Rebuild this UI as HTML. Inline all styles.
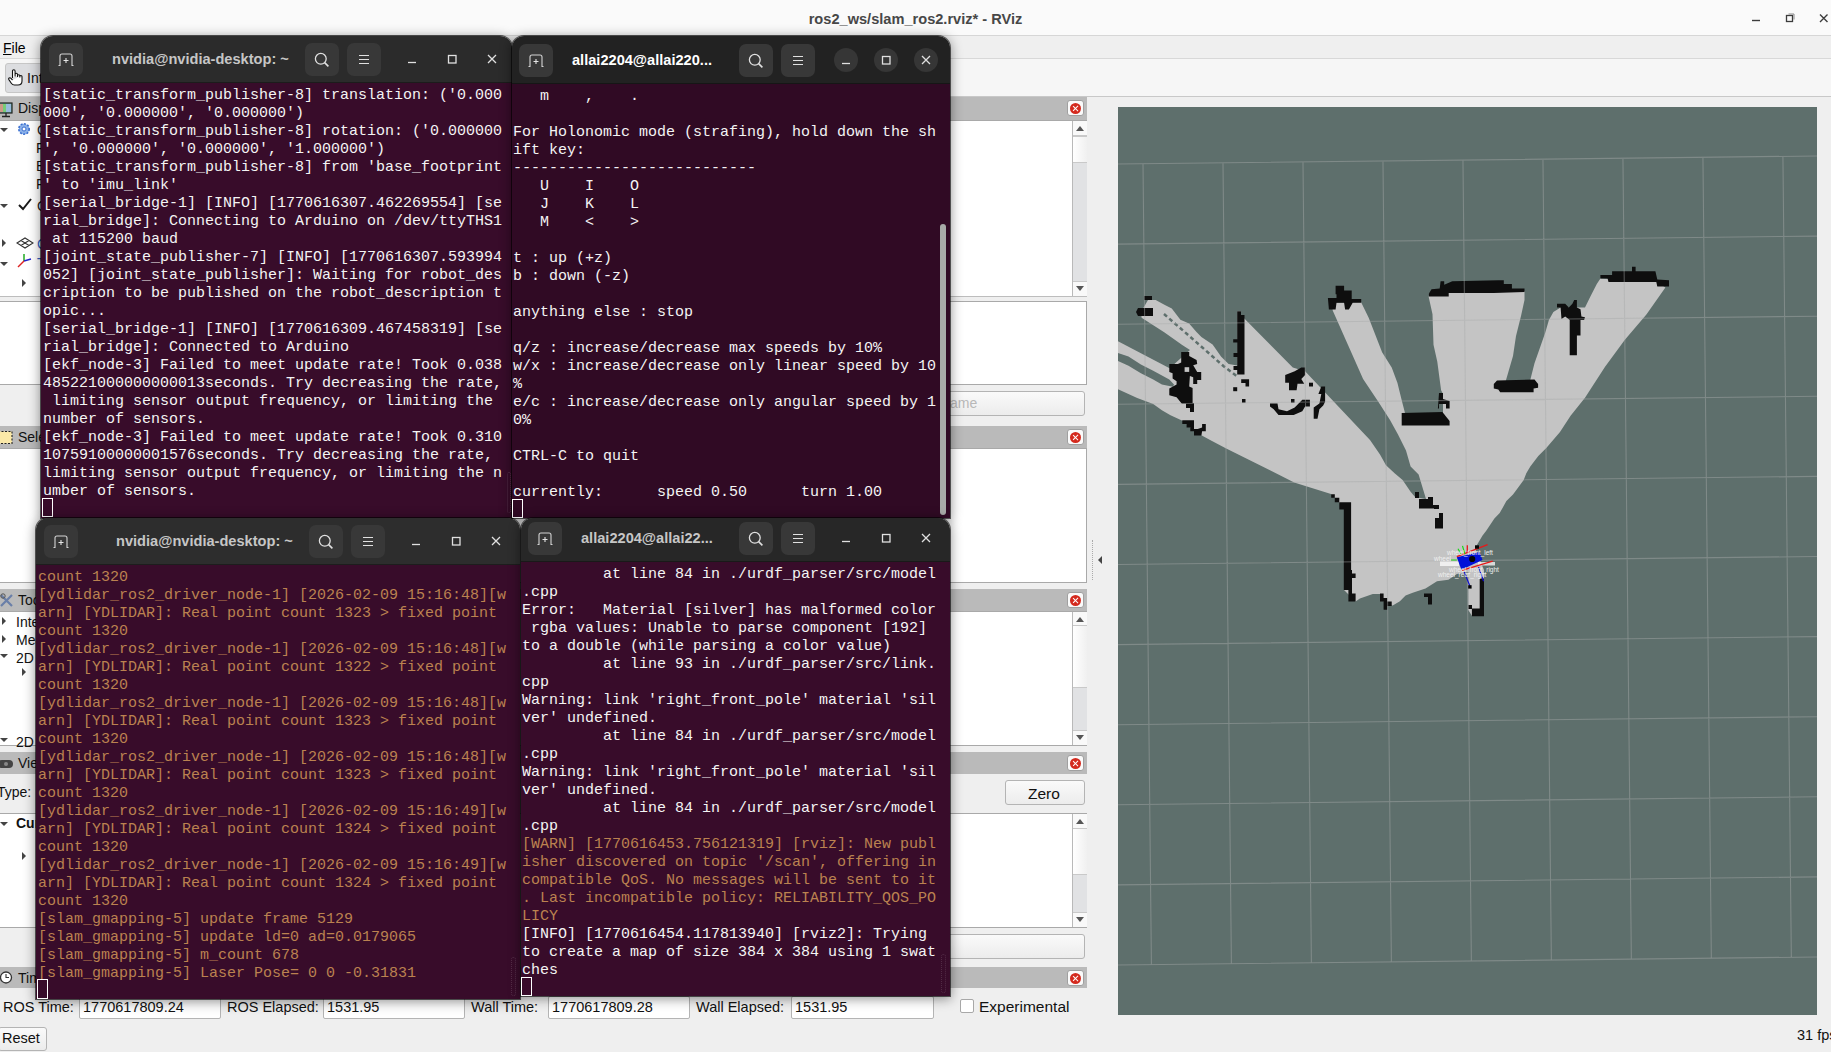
<!DOCTYPE html>
<html><head><meta charset="utf-8"><style>
html,body{margin:0;padding:0}
body{width:1831px;height:1052px;position:relative;overflow:hidden;background:#efefef;font-family:"Liberation Sans",sans-serif}
.ui{position:absolute;white-space:nowrap;line-height:16px}
.title{position:absolute;font-weight:bold;font-size:14.6px;color:#474747;line-height:18px}
.tw{position:absolute;border-radius:12px 12px 0 0;overflow:hidden;box-shadow:0 0 0 1px rgba(0,0,0,0.6),0 2px 12px 1px rgba(0,0,0,0.42)}
.th{position:absolute;left:0;top:0;right:0;box-shadow:inset 0 -1px 0 rgba(0,0,0,0.35)}
.tb{position:absolute;left:0;right:0}
.hb{position:absolute;background:#383838;border-radius:7px;display:flex;align-items:center;justify-content:center}
.cb{position:absolute;width:24px;height:24px;border-radius:12px;background:#363636}
.ic{position:absolute;width:12px;height:12px}
.ic svg{display:block}
.hb svg{display:block}
.tt{position:absolute;font-weight:bold;font-size:14.6px;line-height:18px;white-space:nowrap}
.tx{position:absolute;font-family:"Liberation Mono",monospace;font-size:15px}
.ln{position:absolute;left:0;white-space:pre;line-height:18px;height:18px}
.cur{position:absolute;width:11px;height:19.5px;border:1.5px solid #fff;box-sizing:border-box}
.sb{position:absolute;width:6px;border-radius:3px;background:#a8aaa8}
.xbtn{position:absolute;width:17px;height:16px;background:#fafafa;border:1px solid #a0a0a0;border-radius:3px;box-sizing:border-box}
.xr{position:absolute;left:2px;top:1.5px;width:11px;height:11px;border-radius:50%;background:#d42a1e}
.xr:before,.xr:after{content:"";position:absolute;left:5px;top:2px;width:1.4px;height:7px;background:#fff;transform:rotate(45deg)}
.xr:after{transform:rotate(-45deg)}
.btn{position:absolute;background:linear-gradient(#fafafa,#ececec);border:1px solid #b4b4b4;border-radius:3px;box-sizing:border-box}
.map{position:absolute;left:1118px;top:107px;width:699px;height:908px;overflow:hidden}
</style></head>
<body>
<div style="position:absolute;left:0;top:0;width:1831px;height:36px;background:#fafafa;border-bottom:1px solid #d6d6d6;box-sizing:border-box"></div><div class="title" style="left:0;top:10px;width:1831px;text-align:center;">ros2_ws/slam_ros2.rviz* - RViz</div><svg style="position:absolute;left:1745px;top:10px" width="86" height="16" viewBox="0 0 86 16"><path d="M7 10.5h8" stroke="#3c3c3c" stroke-width="1.4"/><rect x="41.5" y="5.5" width="6" height="6" fill="none" stroke="#3c3c3c" stroke-width="1.3"/><path d="M43.5 4h5.5v5.5" fill="none" stroke="#8a8a8a" stroke-width="1"/><path d="M75 4.5l7.5 7.5M82.5 4.5l-7.5 7.5" stroke="#3c3c3c" stroke-width="1.4"/></svg><div style="position:absolute;left:0;top:36px;width:1831px;height:23px;background:#efefef;border-bottom:1px solid #d8d8d8;box-sizing:border-box"></div><div class="ui" style="left:3px;top:40px;font-size:14px;"><span style="text-decoration:underline">F</span>ile</div><div style="position:absolute;left:0;top:59px;width:1831px;height:38px;background:#f6f6f6;border-bottom:1px solid #c8c8c8;box-sizing:border-box"></div><div style="position:absolute;left:5px;top:63px;width:60px;height:30px;background:#dcdde0;border:1px solid #c6c6c6;border-radius:3px;box-sizing:border-box"></div><svg style="position:absolute;left:8px;top:69px" width="16" height="17" viewBox="0 0 16 17"><path d="M4.5 9V2.2q0-1.4 1.3-1.4t1.3 1.4V7.5 M7.1 7V5.5q0-1.2 1.2-1.2t1.2 1.2V8 M9.5 6.8q0-1.1 1.15-1.1t1.15 1.1V8.5 M11.8 7.5q0-1 1.1-1t1.1 1V12q0 4-4 4H6.5q-2 0-3.2-1.8L.9 10.6q-.6-1 .3-1.6t1.8.4L4.5 11" fill="#fff" stroke="#111" stroke-width="1.1"/></svg><div class="ui" style="left:27px;top:70px;font-size:14px;color:#111">Interact</div><div style="position:absolute;left:0;top:97px;width:1087px;height:23px;background:#bababa"></div><div class="xbtn" style="left:1067px;top:100px;"><div class="xr"></div></div><div class="ui" style="left:18px;top:100px;font-size:14px;color:#111">Displays</div><svg style="position:absolute;left:0;top:102px" width="13" height="16" viewBox="0 0 13 16"><rect x="-3" y="1" width="15" height="10" fill="#6a9" stroke="#222" stroke-width="1.2"/><rect x="0" y="2" width="3" height="8" fill="#c98"/><rect x="3" y="2" width="3" height="8" fill="#7c7"/><rect x="6" y="2" width="5" height="8" fill="#9bd"/><path d="M6 11v3M2 14.5h8" stroke="#222" stroke-width="1.3"/></svg><div style="position:absolute;left:-1px;top:120px;width:1088px;height:177px;background:#fff;border:1px solid #a9a9a9;box-sizing:border-box"></div><div style="position:absolute;left:1072px;top:121px;width:15px;height:175px;background:#e1e2e4;border-left:1px solid #b9b9b9;box-sizing:border-box"></div><div style="position:absolute;left:1073px;top:121px;width:14px;height:15px;background:#f9f9f9;border-bottom:1px solid #c9c9c9;box-sizing:border-box"></div><div style="position:absolute;left:1076px;top:126px;width:0;height:0;border-left:4px solid transparent;border-right:4px solid transparent;border-bottom:5px solid #555"></div><div style="position:absolute;left:1073px;top:281px;width:14px;height:15px;background:#f9f9f9;border-top:1px solid #c9c9c9;box-sizing:border-box"></div><div style="position:absolute;left:1076px;top:286px;width:0;height:0;border-left:4px solid transparent;border-right:4px solid transparent;border-top:5px solid #555"></div><div style="position:absolute;left:1073px;top:136px;width:14px;height:27px;background:linear-gradient(90deg,#fff,#f0f0f0);border-top:1px solid #c9c9c9;border-bottom:1px solid #c9c9c9;box-sizing:border-box"></div><div style="position:absolute;left:0px;top:128px;width:0;height:0;border-left:4px solid transparent;border-right:4px solid transparent;border-top:4px solid #444"></div><svg style="position:absolute;left:16px;top:121px" width="16" height="16" viewBox="0 0 16 16"><circle cx="8" cy="8" r="5.2" fill="#8ab0e8" stroke="#3a6fd0" stroke-width="1.6" stroke-dasharray="2 1.4"/><circle cx="8" cy="8" r="2" fill="#fff" stroke="#3a6fd0" stroke-width="1"/></svg><div class="ui" style="left:36px;top:140px;font-size:14px;color:#111">F</div><div class="ui" style="left:36px;top:158px;font-size:14px;color:#111">B</div><div class="ui" style="left:36px;top:176px;font-size:14px;color:#111">F</div><div style="position:absolute;left:0px;top:204px;width:0;height:0;border-left:4px solid transparent;border-right:4px solid transparent;border-top:4px solid #444"></div><svg style="position:absolute;left:17px;top:196px" width="16" height="16" viewBox="0 0 16 16"><path d="M2 9l4 4 8-10" fill="none" stroke="#1a1a1a" stroke-width="2"/></svg><div style="position:absolute;left:2px;top:239px;width:0;height:0;border-top:4px solid transparent;border-bottom:4px solid transparent;border-left:4px solid #444"></div><svg style="position:absolute;left:16px;top:237px" width="18" height="12" viewBox="0 0 18 12"><path d="M1 6l8-5 8 5-8 5z M5 3.5l8 5 M13 3.5l-8 5" fill="none" stroke="#333" stroke-width="1.1"/></svg><div style="position:absolute;left:0px;top:262px;width:0;height:0;border-left:4px solid transparent;border-right:4px solid transparent;border-top:4px solid #444"></div><svg style="position:absolute;left:15px;top:252px" width="18" height="18" viewBox="0 0 18 18"><path d="M9 9V2" stroke="#2a2" stroke-width="1.5"/><path d="M9 9l7 -2" stroke="#22c" stroke-width="1.5"/><path d="M9 9l-6 6" stroke="#d22" stroke-width="1.5"/></svg><div style="position:absolute;left:22px;top:279px;width:0;height:0;border-top:4px solid transparent;border-bottom:4px solid transparent;border-left:4px solid #444"></div><div class="ui" style="left:37px;top:122px;font-size:14px;color:#222">G</div><div class="ui" style="left:37px;top:198px;font-size:14px;color:#222">G</div><div class="ui" style="left:37px;top:236px;font-size:14px;color:#3060c0">G</div><div class="ui" style="left:37px;top:255px;font-size:14px;color:#3060c0">T</div><div style="position:absolute;left:0;top:296px;width:1087px;height:1px;background:#bdbdbd"></div><div style="position:absolute;left:-1px;top:301px;width:1088px;height:84px;background:#fff;border:1px solid #a9a9a9;box-sizing:border-box"></div><div class="btn" style="left:840px;top:391px;width:245px;height:25px;"></div><div class="ui" style="left:950px;top:395px;font-size:14px;color:#b8b8b8">ame</div><div style="position:absolute;left:0;top:426px;width:1087px;height:22px;background:#bababa"></div><div class="xbtn" style="left:1067px;top:429px;"><div class="xr"></div></div><div class="ui" style="left:18px;top:429px;font-size:14px;color:#111">Selection</div><svg style="position:absolute;left:0;top:430px" width="14" height="15" viewBox="0 0 14 15"><rect x="-2" y="1.5" width="14" height="12" fill="#fbe9a8" stroke="#222" stroke-width="1.1" stroke-dasharray="2 1.5"/></svg><div style="position:absolute;left:-1px;top:448px;width:1088px;height:135px;background:#fff;border:1px solid #a9a9a9;box-sizing:border-box"></div><div style="position:absolute;left:0;top:589px;width:1087px;height:22px;background:#bababa"></div><div class="xbtn" style="left:1067px;top:592px;"><div class="xr"></div></div><div class="ui" style="left:18px;top:592px;font-size:14px;color:#111">Tool Properties</div><svg style="position:absolute;left:0;top:593px" width="14" height="15" viewBox="0 0 14 15"><path d="M1 2l11 11M12 2L1 13" stroke="#6a7fa8" stroke-width="2.2"/><circle cx="3" cy="3" r="2.2" fill="none" stroke="#555"/></svg><div style="position:absolute;left:-1px;top:611px;width:1088px;height:135px;background:#fff;border:1px solid #a9a9a9;box-sizing:border-box"></div><div style="position:absolute;left:1072px;top:612px;width:15px;height:133px;background:#e1e2e4;border-left:1px solid #b9b9b9;box-sizing:border-box"></div><div style="position:absolute;left:1073px;top:612px;width:14px;height:15px;background:#f9f9f9;border-bottom:1px solid #c9c9c9;box-sizing:border-box"></div><div style="position:absolute;left:1076px;top:617px;width:0;height:0;border-left:4px solid transparent;border-right:4px solid transparent;border-bottom:5px solid #555"></div><div style="position:absolute;left:1073px;top:730px;width:14px;height:15px;background:#f9f9f9;border-top:1px solid #c9c9c9;box-sizing:border-box"></div><div style="position:absolute;left:1076px;top:735px;width:0;height:0;border-left:4px solid transparent;border-right:4px solid transparent;border-top:5px solid #555"></div><div style="position:absolute;left:1073px;top:625px;width:14px;height:63px;background:linear-gradient(90deg,#fff,#f0f0f0);border-top:1px solid #c9c9c9;border-bottom:1px solid #c9c9c9;box-sizing:border-box"></div><div style="position:absolute;left:2px;top:617px;width:0;height:0;border-top:4px solid transparent;border-bottom:4px solid transparent;border-left:4px solid #444"></div><div class="ui" style="left:16px;top:614px;font-size:14px;color:#111">Interact</div><div style="position:absolute;left:2px;top:635px;width:0;height:0;border-top:4px solid transparent;border-bottom:4px solid transparent;border-left:4px solid #444"></div><div class="ui" style="left:16px;top:632px;font-size:14px;color:#111">Measure</div><div style="position:absolute;left:0px;top:654px;width:0;height:0;border-left:4px solid transparent;border-right:4px solid transparent;border-top:4px solid #444"></div><div class="ui" style="left:16px;top:650px;font-size:14px;color:#111">2D Goal Pose</div><div style="position:absolute;left:22px;top:668px;width:0;height:0;border-top:4px solid transparent;border-bottom:4px solid transparent;border-left:4px solid #444"></div><div style="position:absolute;left:0px;top:738px;width:0;height:0;border-left:4px solid transparent;border-right:4px solid transparent;border-top:4px solid #444"></div><div class="ui" style="left:16px;top:734px;font-size:14px;color:#111">2D Pose Estimate</div><div style="position:absolute;left:0;top:752px;width:1087px;height:22px;background:#bababa"></div><div class="xbtn" style="left:1067px;top:755px;"><div class="xr"></div></div><div class="ui" style="left:18px;top:755px;font-size:14px;color:#111">Views</div><svg style="position:absolute;left:0;top:757px" width="14" height="14" viewBox="0 0 14 14"><rect x="-2" y="3" width="15" height="8" rx="4" fill="#444"/><circle cx="6" cy="7" r="2" fill="#888"/></svg><div class="ui" style="left:-3px;top:784px;font-size:14px;color:#111">Type:</div><div class="btn" style="left:1005px;top:780px;width:80px;height:25px;"></div><div class="ui" style="left:1028px;top:786px;font-size:15.5px;color:#111">Zero</div><div style="position:absolute;left:-1px;top:813px;width:1088px;height:115px;background:#fff;border:1px solid #a9a9a9;box-sizing:border-box"></div><div style="position:absolute;left:1072px;top:814px;width:15px;height:113px;background:#e1e2e4;border-left:1px solid #b9b9b9;box-sizing:border-box"></div><div style="position:absolute;left:1073px;top:814px;width:14px;height:15px;background:#f9f9f9;border-bottom:1px solid #c9c9c9;box-sizing:border-box"></div><div style="position:absolute;left:1076px;top:819px;width:0;height:0;border-left:4px solid transparent;border-right:4px solid transparent;border-bottom:5px solid #555"></div><div style="position:absolute;left:1073px;top:912px;width:14px;height:15px;background:#f9f9f9;border-top:1px solid #c9c9c9;box-sizing:border-box"></div><div style="position:absolute;left:1076px;top:917px;width:0;height:0;border-left:4px solid transparent;border-right:4px solid transparent;border-top:5px solid #555"></div><div style="position:absolute;left:1073px;top:828px;width:14px;height:47px;background:linear-gradient(90deg,#fff,#f0f0f0);border-top:1px solid #c9c9c9;border-bottom:1px solid #c9c9c9;box-sizing:border-box"></div><div style="position:absolute;left:0px;top:822px;width:0;height:0;border-left:4px solid transparent;border-right:4px solid transparent;border-top:4px solid #444"></div><div class="ui" style="left:16px;top:815px;font-size:14px;color:#111;font-weight:bold">Current View</div><div style="position:absolute;left:22px;top:852px;width:0;height:0;border-top:4px solid transparent;border-bottom:4px solid transparent;border-left:4px solid #444"></div><div class="btn" style="left:840px;top:934px;width:245px;height:25px;"></div><div style="position:absolute;left:0;top:967px;width:1087px;height:21px;background:#bababa"></div><div class="xbtn" style="left:1067px;top:970px;"><div class="xr"></div></div><div class="ui" style="left:18px;top:970px;font-size:14px;color:#111">Time</div><svg style="position:absolute;left:0;top:970px" width="14" height="15" viewBox="0 0 14 15"><circle cx="6" cy="7.5" r="5.5" fill="#fff" stroke="#333" stroke-width="1.3"/><path d="M6 4v3.5h3" fill="none" stroke="#333" stroke-width="1.1"/></svg><div class="ui" style="left:3px;top:999px;font-size:14.5px;color:#111">ROS Time:</div><div style="position:absolute;left:79px;top:996px;width:142px;height:23px;background:#fff;border:1px solid #b4b4b4;border-radius:2px;box-sizing:border-box"></div><div class="ui" style="left:83px;top:999px;font-size:14.5px;color:#111">1770617809.24</div><div class="ui" style="left:227px;top:999px;font-size:14.5px;color:#111">ROS Elapsed:</div><div style="position:absolute;left:323px;top:996px;width:142px;height:23px;background:#fff;border:1px solid #b4b4b4;border-radius:2px;box-sizing:border-box"></div><div class="ui" style="left:327px;top:999px;font-size:14.5px;color:#111">1531.95</div><div class="ui" style="left:471px;top:999px;font-size:14.5px;color:#111">Wall Time:</div><div style="position:absolute;left:548px;top:996px;width:142px;height:23px;background:#fff;border:1px solid #b4b4b4;border-radius:2px;box-sizing:border-box"></div><div class="ui" style="left:552px;top:999px;font-size:14.5px;color:#111">1770617809.28</div><div class="ui" style="left:696px;top:999px;font-size:14.5px;color:#111">Wall Elapsed:</div><div style="position:absolute;left:791px;top:996px;width:143px;height:23px;background:#fff;border:1px solid #b4b4b4;border-radius:2px;box-sizing:border-box"></div><div class="ui" style="left:795px;top:999px;font-size:14.5px;color:#111">1531.95</div><div style="position:absolute;left:960px;top:999px;width:14px;height:14px;background:#fff;border:1px solid #a8a8a8;border-radius:2px;box-sizing:border-box"></div><div class="ui" style="left:979px;top:999px;font-size:15.5px;color:#111">Experimental</div><div class="btn" style="left:-2px;top:1027px;width:49px;height:24px;"></div><div class="ui" style="left:2px;top:1030px;font-size:14.5px;color:#111">Reset</div><div class="ui" style="left:1797px;top:1027px;font-size:14.5px;color:#111;white-space:nowrap">31 fps</div><div style="position:absolute;left:1092px;top:540px;width:1px;height:40px;border-left:1px dotted #aaa"></div><div style="position:absolute;left:1098px;top:556px;width:0;height:0;border-top:4px solid transparent;border-bottom:4px solid transparent;border-right:4px solid #444"></div>
<div class="map"><svg width="699" height="908" viewBox="0 0 699 908" style="display:block">
<rect width="699" height="908" fill="#5e6f6c"/>
<polygon points="0.0,234.3 51.6,261.3 72.0,243.0 64.2,237.9 46.2,225.2 23.6,210.8 23.0,205.0 30.0,193.0 37.7,192.9 46.4,197.8 53.8,201.5 62.4,212.7 71.1,216.4 78.5,225.0 83.4,230.0 94.6,237.4 103.2,249.7 110.6,257.1 119.3,258.4 119.3,204.0 123.0,204.0 123.0,208.0 126.8,212.0 174.8,260.5 187.1,264.3 252.0,333.0 262.0,347.6 268.0,358.2 276.6,366.2 284.6,372.9 292.6,384.8 297.3,390.2 308.0,392.0 304.6,380.8 300.6,367.5 292.6,359.6 288.0,343.6 284.0,335.6 280.0,327.6 272.0,313.0 260.3,294.7 245.1,271.9 229.9,237.7 214.7,203.4 214.0,196.0 243.0,195.0 250.8,211.0 264.1,245.3 273.7,260.5 279.4,275.7 284.1,294.7 287.0,306.0 325.0,306.0 325.0,287.0 323.1,283.3 319.3,254.8 315.5,237.7 314.5,207.2 310.7,190.0 311.0,186.0 406.5,184.0 406.5,193.0 403.0,209.0 398.0,229.0 395.0,249.0 387.6,274.4 412.0,274.0 416.5,256.3 427.3,225.6 430.9,213.0 435.4,204.9 442.6,200.4 467.0,200.4 472.4,189.5 478.8,176.9 482.4,171.5 539.3,175.0 547.4,180.5 528.4,207.6 506.7,232.9 486.9,260.0 467.0,290.7 452.6,308.7 442.0,325.0 428.3,340.9 420.3,348.9 412.3,359.6 408.3,366.2 405.7,372.9 395.0,387.5 388.4,394.1 381.7,406.1 376.4,411.4 368.4,423.4 364.4,428.7 360.4,435.4 357.0,441.3 366.0,463.0 366.0,509.0 354.0,509.0 350.3,503.0 350.3,465.0 338.9,467.1 330.4,472.8 319.0,474.3 307.5,481.4 294.7,485.7 287.6,488.5 281.9,494.2 274.7,498.5 270.5,498.5 266.2,495.7 263.3,487.1 254.8,487.1 241.9,491.4 237.6,494.6 226.0,483.0 226.0,402.0 221.3,395.3 213.0,387.0 176.2,375.4 108.2,341.6 92.1,333.0 76.0,324.3 66.1,314.4 52.5,308.3 43.9,303.3 35.2,297.1 19.2,291.0 0.0,282.3" fill="#c4c4c4"/>
<polygon points="0.0,245.9 10.5,249.6 22.9,257.6 35.2,263.8 51.3,272.4 56.0,277.4 55.0,279.8 43.9,277.4 35.2,272.4 22.9,266.2 10.5,258.8 0.0,253.9" fill="#5e6f6c"/>
<polyline points="46.0,207.0 77.0,234.0 106.0,259.5 120.0,270.0" fill="none" stroke="#5e6f6c" stroke-width="2.5" stroke-dasharray="4 3"/>
<polygon points="26.0,189.0 34.0,189.0 34.0,193.0 26.0,193.0" fill="#0e0e0e"/>
<polygon points="20.0,201.0 35.0,201.0 35.0,209.0 20.0,209.0 18.0,205.0" fill="#0e0e0e"/>
<polygon points="63.2,244.9 71.2,244.9 71.2,248.9 78.6,252.9 79.2,256.9 75.2,258.2 79.2,264.9 83.2,264.9 83.2,272.9 79.2,272.9 79.2,276.9 75.2,276.9 75.2,270.2 71.9,268.9 71.2,279.5 74.6,280.9 74.6,296.8 63.9,296.8 58.6,290.2 51.3,288.2 51.3,281.5 58.6,277.5 58.6,274.2 54.6,271.5 54.6,266.2 51.3,264.9 51.3,256.9 56.6,256.9 59.9,256.9 63.2,255.6" fill="#0e0e0e"/>
<polygon points="68.0,296.0 76.0,296.0 76.0,305.0 72.0,305.0 72.0,301.0 68.0,301.0" fill="#0e0e0e"/>
<polygon points="64.3,313.2 76.0,313.2 76.0,321.9 79.7,321.9 84.1,320.6 84.1,316.9 87.8,316.9 87.8,324.3 84.1,324.3 83.4,328.6 76.0,328.6 76.0,324.3 72.3,324.3 72.3,320.6 68.6,320.6 68.6,316.9 64.3,316.9" fill="#0e0e0e"/>
<polygon points="119.2,204.3 123.0,204.3 123.0,208.0 126.5,208.0 126.5,267.5 119.2,267.5 119.2,263.0 115.5,263.0 115.5,259.0 119.2,259.0 119.2,250.0 115.5,250.0 115.5,246.0 119.2,246.0 119.2,235.6 115.2,235.6 115.2,232.3 119.2,232.3" fill="#0e0e0e"/>
<polygon points="123.2,272.2 131.1,272.2 131.1,279.5 127.5,279.5 127.5,276.0 123.2,276.0" fill="#0e0e0e"/>
<polygon points="115.2,280.2 119.2,280.2 119.2,284.2 115.2,284.2" fill="#0e0e0e"/>
<polygon points="124.0,292.0 127.5,292.0 127.5,295.7 124.0,295.7" fill="#0e0e0e"/>
<polygon points="167.2,268.1 176.7,264.3 183.3,260.5 187.1,260.5 187.1,268.1 183.3,271.9 186.2,276.7 179.5,276.7 178.6,283.3 171.0,283.3 171.0,275.7 167.2,275.7" fill="#0e0e0e"/>
<polygon points="152.0,296.6 159.5,296.6 160.5,302.3 169.0,304.2 176.7,300.4 184.3,292.8 191.9,292.8 191.9,299.5 187.1,299.5 184.3,304.2 175.7,308.0 160.5,308.0 155.7,302.3 152.0,299.5" fill="#0e0e0e"/>
<polygon points="203.3,279.5 207.1,279.5 207.1,294.7 205.2,298.5 201.4,302.3 199.5,311.8 195.7,311.8 195.7,300.4 201.4,296.6 203.3,287.1 200.4,287.1" fill="#0e0e0e"/>
<polygon points="173.0,292.0 176.5,292.0 176.5,295.7 173.0,295.7" fill="#0e0e0e"/>
<polygon points="191.0,275.7 195.0,275.7 195.0,279.5 191.0,279.5" fill="#0e0e0e"/>
<polygon points="217.6,178.7 226.1,178.7 226.1,183.5 233.7,183.5 233.7,192.0 243.2,192.0 243.2,195.8 234.7,195.8 230.9,202.5 227.1,202.5 226.1,195.8 218.5,195.8 217.6,202.5 210.9,202.5 209.9,191.1 218.5,191.1 218.5,187.3 217.6,187.3" fill="#0e0e0e"/>
<polygon points="310.8,186.8 313.5,182.3 321.7,181.4 322.6,174.2 326.2,174.2 326.2,177.8 334.3,174.2 380.3,173.3 385.8,173.3 385.8,176.9 393.9,176.9 393.9,181.4 406.5,181.4 406.5,185.0 375.8,185.9 330.7,185.9 330.7,189.5 310.8,189.5" fill="#0e0e0e"/>
<polygon points="379.0,273.5 416.5,272.6 420.1,277.1 420.1,280.7 415.6,281.6 415.6,285.2 382.2,285.2 380.3,282.5 375.8,281.6 375.8,277.0" fill="#0e0e0e"/>
<polygon points="439.0,196.8 447.2,196.8 450.8,200.4 454.4,196.8 456.2,193.1 458.9,193.1 458.9,200.4 462.5,202.2 463.4,209.4 467.0,210.3 466.1,213.0 462.5,213.0 462.5,228.4 458.9,228.4 458.9,248.2 451.7,248.2 451.7,213.0 447.2,209.4 443.5,212.1 442.6,200.4 439.0,200.4" fill="#0e0e0e"/>
<polygon points="482.4,167.9 494.1,167.9 494.1,164.3 514.0,164.3 514.0,159.7 517.6,159.7 517.6,164.3 537.4,164.3 539.3,172.4 551.0,173.3 551.0,179.6 539.3,179.6 538.3,175.1 490.5,175.1 489.6,171.5 482.4,171.5" fill="#0e0e0e"/>
<polygon points="283.7,306.0 324.4,305.1 331.6,314.1 331.6,318.6 283.7,318.6" fill="#0e0e0e"/>
<polygon points="321.0,286.0 325.0,286.0 325.0,292.0 331.6,294.0 331.6,301.5 328.0,301.5 328.0,297.0 321.0,297.0 321.0,301.5 319.9,301.5" fill="#0e0e0e"/>
<polygon points="221.3,395.3 233.1,395.3 233.1,463.0 234.0,463.0 234.0,466.6 237.6,466.6 237.6,471.1 234.0,471.1 234.0,486.5 237.6,486.5 237.6,494.6 230.4,494.6 230.4,482.9 225.8,482.9 225.8,402.5 221.3,402.5" fill="#0e0e0e"/>
<polygon points="213.2,387.2 216.8,387.2 216.8,390.8 221.3,390.8 221.3,395.3 216.8,395.3 216.8,390.8 213.2,390.8" fill="#0e0e0e"/>
<polygon points="262.0,486.5 265.6,486.5 265.6,491.0 269.2,491.0 269.2,494.6 273.7,494.6 273.7,499.1 269.2,499.1 269.2,502.7 265.6,502.7 265.6,494.6 262.0,494.6" fill="#0e0e0e"/>
<polygon points="297.0,385.0 301.0,385.0 301.0,391.0 297.0,391.0" fill="#0e0e0e"/>
<polygon points="301.0,392.0 310.0,392.0 310.0,390.0 315.0,390.0 315.0,398.0 321.0,398.0 321.0,402.0 316.0,402.0 316.0,401.5 301.0,401.5" fill="#0e0e0e"/>
<polygon points="321.0,406.0 325.0,406.0 325.0,421.5 317.0,421.5 317.0,411.0 321.0,411.0" fill="#0e0e0e"/>
<polygon points="306.0,486.5 314.0,486.5 314.0,497.5 310.0,497.5 310.0,490.0 306.0,490.0" fill="#0e0e0e"/>
<polygon points="361.7,471.4 366.0,471.4 366.0,509.2 353.9,509.2 353.9,501.4 361.7,501.4" fill="#0e0e0e"/>
<polygon points="350.5,498.0 354.0,498.0 354.0,502.0 350.5,502.0" fill="#0e0e0e"/>
<rect x="66.59999999999991" y="260.2" width="4.6" height="4.7" fill="#c4c4c4"/>
<path d="M-54.99 57.63L-46.58 858.63 M25.00 56.71L33.41 857.71 M104.99 55.80L113.40 856.80 M184.98 54.88L193.39 855.88 M264.97 53.97L273.38 854.97 M344.96 53.05L353.37 854.05 M424.95 52.14L433.36 853.14 M504.94 51.22L513.35 852.22 M584.93 50.31L593.34 851.31 M664.92 49.39L673.33 850.39 M744.91 48.48L753.32 849.48 M0 57.00L699 49.00 M0 137.10L699 129.10 M0 217.20L699 209.20 M0 297.30L699 289.30 M0 377.40L699 369.40 M0 457.50L699 449.50 M0 537.60L699 529.60 M0 617.70L699 609.70 M0 697.80L699 689.80 M0 777.90L699 769.90 M0 858.00L699 850.00" stroke="#a9aaaa" stroke-width="1.1" fill="none" opacity="0.45"/>
<rect x="322" y="454.5" width="19" height="4.5" fill="#f4f4f4" opacity="0.9"/>
<rect x="360" y="455" width="17" height="3.5" fill="#f4f4f4" opacity="0.8"/>
<polygon points="338.8,450.2 361.6,445.1 364.5,453.1 343.4,462.8" fill="#0010d8"/>
<circle cx="354.20000000000005" cy="452" r="3.1" fill="#050505"/>
<path d="M338.8,449.7L369.6,437.7M343.9,463.3L374.7,454.2M349.3,438.3L349.3,445.1" stroke="#e81818" stroke-width="1.3"/>
<path d="M340.0,441.7L342.8,446.8M344.5,438.8L346.8,446.8M333.0,453.0L338.8,453.0" stroke="#18d818" stroke-width="1.2"/>
<path d="M346.2,465.0L352.0,479.3M360.5,460.0L365.6,474.2" stroke="#1010d0" stroke-width="1.2"/>
<rect x="350.20000000000005" y="478.20000000000005" width="3.4" height="3.4" fill="#050505"/>
<rect x="357" y="438.29999999999995" width="4" height="3.4" fill="#050505"/>
<text x="329" y="448" font-family="Liberation Sans" font-size="6.5" fill="#f0f0f0">wheel_front_left</text>
<text x="316" y="453.5" font-family="Liberation Sans" font-size="6.5" fill="#f0f0f0">wheel_</text>
<text x="331" y="465" font-family="Liberation Sans" font-size="6.5" fill="#f0f0f0">wheel_front_right</text>
<text x="320" y="470" font-family="Liberation Sans" font-size="6.5" fill="#f0f0f0">wheel_rear_right</text>
</svg></div>
<div class="tw" style="left:41px;top:36px;width:471px;height:482px;">
<div class="th" style="height:47px;background:#2b2b2b;"></div>
<div class="tb" style="top:47px;height:435px;background:#380c2a;"></div>
</div>
<div class="hb" style="left:49px;top:43px;width:34px;height:33px;"><svg width="34" height="33" viewBox="0 0 34 33"><path d="M9.5 22.5h1.5V13q0-2 2-2h8q2 0 2 2v9.5h1.5" fill="none" stroke="#d4d4d4" stroke-width="1.1"/><path d="M17 15v5M14.5 17.5h5" stroke="#e4e4e4" stroke-width="1.1"/></svg></div>
<div class="hb" style="left:305px;top:43px;width:34px;height:33px;"><svg width="16" height="16" viewBox="0 0 16 16"><circle cx="6.8" cy="6.8" r="5.4" fill="none" stroke="#e0e0e0" stroke-width="1.3"/><path d="M10.6 10.6l3.8 3.8" stroke="#e0e0e0" stroke-width="1.6"/></svg></div>
<div class="hb" style="left:347px;top:43px;width:34px;height:33px;"><svg width="14" height="12" viewBox="0 0 14 12"><path d="M2 1.5h10M2 5.5h10M2 9.5h10" stroke="#e0e0e0" stroke-width="1.2"/></svg></div>
<div class="ic" style="left:406px;top:53px;"><svg width="12" height="12" viewBox="0 0 12 12"><path d="M2 9.5h8" stroke="#e0e0e0" stroke-width="1.3"/></svg></div>
<div class="ic" style="left:446px;top:53px;"><svg width="12" height="12" viewBox="0 0 12 12"><rect x="2.5" y="2.5" width="7.5" height="7.5" fill="none" stroke="#e0e0e0" stroke-width="1.3"/></svg></div>
<div class="ic" style="left:486px;top:53px;"><svg width="12" height="12" viewBox="0 0 12 12"><path d="M2 2l8 8M10 2l-8 8" stroke="#e0e0e0" stroke-width="1.3"/></svg></div>
<div class="tt" style="left:112px;top:50px;color:#c6c6c6;">nvidia@nvidia-desktop: ~</div>
<div class="tx" style="left:43px;top:0px;"><div class="ln" style="top:87px;color:#f4f4f4">[static_transform_publisher-8] translation: (&#x27;0.000</div><div class="ln" style="top:105px;color:#f4f4f4">000&#x27;, &#x27;0.000000&#x27;, &#x27;0.000000&#x27;)</div><div class="ln" style="top:123px;color:#f4f4f4">[static_transform_publisher-8] rotation: (&#x27;0.000000</div><div class="ln" style="top:141px;color:#f4f4f4">&#x27;, &#x27;0.000000&#x27;, &#x27;0.000000&#x27;, &#x27;1.000000&#x27;)</div><div class="ln" style="top:159px;color:#f4f4f4">[static_transform_publisher-8] from &#x27;base_footprint</div><div class="ln" style="top:177px;color:#f4f4f4">&#x27; to &#x27;imu_link&#x27;</div><div class="ln" style="top:195px;color:#f4f4f4">[serial_bridge-1] [INFO] [1770616307.462269554] [se</div><div class="ln" style="top:213px;color:#f4f4f4">rial_bridge]: Connecting to Arduino on /dev/ttyTHS1</div><div class="ln" style="top:231px;color:#f4f4f4"> at 115200 baud</div><div class="ln" style="top:249px;color:#f4f4f4">[joint_state_publisher-7] [INFO] [1770616307.593994</div><div class="ln" style="top:267px;color:#f4f4f4">052] [joint_state_publisher]: Waiting for robot_des</div><div class="ln" style="top:285px;color:#f4f4f4">cription to be published on the robot_description t</div><div class="ln" style="top:303px;color:#f4f4f4">opic...</div><div class="ln" style="top:321px;color:#f4f4f4">[serial_bridge-1] [INFO] [1770616309.467458319] [se</div><div class="ln" style="top:339px;color:#f4f4f4">rial_bridge]: Connected to Arduino</div><div class="ln" style="top:357px;color:#f4f4f4">[ekf_node-3] Failed to meet update rate! Took 0.038</div><div class="ln" style="top:375px;color:#f4f4f4">485221000000000013seconds. Try decreasing the rate,</div><div class="ln" style="top:393px;color:#f4f4f4"> limiting sensor output frequency, or limiting the</div><div class="ln" style="top:411px;color:#f4f4f4">number of sensors.</div><div class="ln" style="top:429px;color:#f4f4f4">[ekf_node-3] Failed to meet update rate! Took 0.310</div><div class="ln" style="top:447px;color:#f4f4f4">10759100000001576seconds. Try decreasing the rate,</div><div class="ln" style="top:465px;color:#f4f4f4">limiting sensor output frequency, or limiting the n</div><div class="ln" style="top:483px;color:#f4f4f4">umber of sensors.</div></div>
<div class="cur" style="left:42px;top:497.5px;"></div><div class="tw" style="left:512px;top:36px;width:438px;height:482px;">
<div class="th" style="height:48px;background:#222222;"></div>
<div class="tb" style="top:48px;height:434px;background:#300a24;"></div>
</div>
<div class="hb" style="left:519px;top:44px;width:34px;height:33px;"><svg width="34" height="33" viewBox="0 0 34 33"><path d="M9.5 22.5h1.5V13q0-2 2-2h8q2 0 2 2v9.5h1.5" fill="none" stroke="#d4d4d4" stroke-width="1.1"/><path d="M17 15v5M14.5 17.5h5" stroke="#e4e4e4" stroke-width="1.1"/></svg></div>
<div class="hb" style="left:739px;top:44px;width:34px;height:33px;"><svg width="16" height="16" viewBox="0 0 16 16"><circle cx="6.8" cy="6.8" r="5.4" fill="none" stroke="#e0e0e0" stroke-width="1.3"/><path d="M10.6 10.6l3.8 3.8" stroke="#e0e0e0" stroke-width="1.6"/></svg></div>
<div class="hb" style="left:781px;top:44px;width:34px;height:33px;"><svg width="14" height="12" viewBox="0 0 14 12"><path d="M2 1.5h10M2 5.5h10M2 9.5h10" stroke="#e0e0e0" stroke-width="1.2"/></svg></div>
<div class="cb" style="left:834px;top:48px;"></div>
<div class="ic" style="left:840px;top:54px;"><svg width="12" height="12" viewBox="0 0 12 12"><path d="M2 9.5h8" stroke="#e0e0e0" stroke-width="1.3"/></svg></div>
<div class="cb" style="left:874px;top:48px;"></div>
<div class="ic" style="left:880px;top:54px;"><svg width="12" height="12" viewBox="0 0 12 12"><rect x="2.5" y="2.5" width="7.5" height="7.5" fill="none" stroke="#e0e0e0" stroke-width="1.3"/></svg></div>
<div class="cb" style="left:914px;top:48px;"></div>
<div class="ic" style="left:920px;top:54px;"><svg width="12" height="12" viewBox="0 0 12 12"><path d="M2 2l8 8M10 2l-8 8" stroke="#e0e0e0" stroke-width="1.3"/></svg></div>
<div class="tt" style="left:572px;top:51px;color:#ffffff;">allai2204@allai220...</div>
<div class="tx" style="left:513px;top:0px;"><div class="ln" style="top:88px;color:#f4f4f4">   m    ,    .</div><div class="ln" style="top:106px;color:#f4f4f4"></div><div class="ln" style="top:124px;color:#f4f4f4">For Holonomic mode (strafing), hold down the sh</div><div class="ln" style="top:142px;color:#f4f4f4">ift key:</div><div class="ln" style="top:160px;color:#f4f4f4">---------------------------</div><div class="ln" style="top:178px;color:#f4f4f4">   U    I    O</div><div class="ln" style="top:196px;color:#f4f4f4">   J    K    L</div><div class="ln" style="top:214px;color:#f4f4f4">   M    &lt;    &gt;</div><div class="ln" style="top:232px;color:#f4f4f4"></div><div class="ln" style="top:250px;color:#f4f4f4">t : up (+z)</div><div class="ln" style="top:268px;color:#f4f4f4">b : down (-z)</div><div class="ln" style="top:286px;color:#f4f4f4"></div><div class="ln" style="top:304px;color:#f4f4f4">anything else : stop</div><div class="ln" style="top:322px;color:#f4f4f4"></div><div class="ln" style="top:340px;color:#f4f4f4">q/z : increase/decrease max speeds by 10%</div><div class="ln" style="top:358px;color:#f4f4f4">w/x : increase/decrease only linear speed by 10</div><div class="ln" style="top:376px;color:#f4f4f4">%</div><div class="ln" style="top:394px;color:#f4f4f4">e/c : increase/decrease only angular speed by 1</div><div class="ln" style="top:412px;color:#f4f4f4">0%</div><div class="ln" style="top:430px;color:#f4f4f4"></div><div class="ln" style="top:448px;color:#f4f4f4">CTRL-C to quit</div><div class="ln" style="top:466px;color:#f4f4f4"></div><div class="ln" style="top:484px;color:#f4f4f4">currently:      speed 0.50      turn 1.00</div></div>
<div class="cur" style="left:512px;top:498.5px;"></div>
<div class="sb" style="left:940px;top:224px;height:291px;"></div><div class="tw" style="left:36px;top:518px;width:484px;height:481px;">
<div class="th" style="height:47px;background:#2d2d2d;"></div>
<div class="tb" style="top:47px;height:434px;background:#380c2a;"></div>
</div>
<div class="hb" style="left:44px;top:525px;width:34px;height:33px;"><svg width="34" height="33" viewBox="0 0 34 33"><path d="M9.5 22.5h1.5V13q0-2 2-2h8q2 0 2 2v9.5h1.5" fill="none" stroke="#d4d4d4" stroke-width="1.1"/><path d="M17 15v5M14.5 17.5h5" stroke="#e4e4e4" stroke-width="1.1"/></svg></div>
<div class="hb" style="left:309px;top:525px;width:34px;height:33px;"><svg width="16" height="16" viewBox="0 0 16 16"><circle cx="6.8" cy="6.8" r="5.4" fill="none" stroke="#e0e0e0" stroke-width="1.3"/><path d="M10.6 10.6l3.8 3.8" stroke="#e0e0e0" stroke-width="1.6"/></svg></div>
<div class="hb" style="left:351px;top:525px;width:34px;height:33px;"><svg width="14" height="12" viewBox="0 0 14 12"><path d="M2 1.5h10M2 5.5h10M2 9.5h10" stroke="#e0e0e0" stroke-width="1.2"/></svg></div>
<div class="ic" style="left:410px;top:535px;"><svg width="12" height="12" viewBox="0 0 12 12"><path d="M2 9.5h8" stroke="#e0e0e0" stroke-width="1.3"/></svg></div>
<div class="ic" style="left:450px;top:535px;"><svg width="12" height="12" viewBox="0 0 12 12"><rect x="2.5" y="2.5" width="7.5" height="7.5" fill="none" stroke="#e0e0e0" stroke-width="1.3"/></svg></div>
<div class="ic" style="left:490px;top:535px;"><svg width="12" height="12" viewBox="0 0 12 12"><path d="M2 2l8 8M10 2l-8 8" stroke="#e0e0e0" stroke-width="1.3"/></svg></div>
<div class="tt" style="left:116px;top:532px;color:#c6c6c6;">nvidia@nvidia-desktop: ~</div>
<div class="tx" style="left:38px;top:0px;"><div class="ln" style="top:569px;color:#bb8250">count 1320</div><div class="ln" style="top:587px;color:#bb8250">[ydlidar_ros2_driver_node-1] [2026-02-09 15:16:48][w</div><div class="ln" style="top:605px;color:#bb8250">arn] [YDLIDAR]: Real point count 1323 &gt; fixed point</div><div class="ln" style="top:623px;color:#bb8250">count 1320</div><div class="ln" style="top:641px;color:#bb8250">[ydlidar_ros2_driver_node-1] [2026-02-09 15:16:48][w</div><div class="ln" style="top:659px;color:#bb8250">arn] [YDLIDAR]: Real point count 1322 &gt; fixed point</div><div class="ln" style="top:677px;color:#bb8250">count 1320</div><div class="ln" style="top:695px;color:#bb8250">[ydlidar_ros2_driver_node-1] [2026-02-09 15:16:48][w</div><div class="ln" style="top:713px;color:#bb8250">arn] [YDLIDAR]: Real point count 1323 &gt; fixed point</div><div class="ln" style="top:731px;color:#bb8250">count 1320</div><div class="ln" style="top:749px;color:#bb8250">[ydlidar_ros2_driver_node-1] [2026-02-09 15:16:48][w</div><div class="ln" style="top:767px;color:#bb8250">arn] [YDLIDAR]: Real point count 1323 &gt; fixed point</div><div class="ln" style="top:785px;color:#bb8250">count 1320</div><div class="ln" style="top:803px;color:#bb8250">[ydlidar_ros2_driver_node-1] [2026-02-09 15:16:49][w</div><div class="ln" style="top:821px;color:#bb8250">arn] [YDLIDAR]: Real point count 1324 &gt; fixed point</div><div class="ln" style="top:839px;color:#bb8250">count 1320</div><div class="ln" style="top:857px;color:#bb8250">[ydlidar_ros2_driver_node-1] [2026-02-09 15:16:49][w</div><div class="ln" style="top:875px;color:#bb8250">arn] [YDLIDAR]: Real point count 1324 &gt; fixed point</div><div class="ln" style="top:893px;color:#bb8250">count 1320</div><div class="ln" style="top:911px;color:#bb8250">[slam_gmapping-5] update frame 5129</div><div class="ln" style="top:929px;color:#bb8250">[slam_gmapping-5] update ld=0 ad=0.0179065</div><div class="ln" style="top:947px;color:#bb8250">[slam_gmapping-5] m_count 678</div><div class="ln" style="top:965px;color:#bb8250">[slam_gmapping-5] Laser Pose= 0 0 -0.31831</div></div>
<div class="cur" style="left:37px;top:979px;"></div><div class="tw" style="left:521px;top:518px;width:429px;height:478px;">
<div class="th" style="height:44px;background:#272727;"></div>
<div class="tb" style="top:44px;height:434px;background:#380c2a;"></div>
</div>
<div class="hb" style="left:528px;top:522px;width:34px;height:33px;"><svg width="34" height="33" viewBox="0 0 34 33"><path d="M9.5 22.5h1.5V13q0-2 2-2h8q2 0 2 2v9.5h1.5" fill="none" stroke="#d4d4d4" stroke-width="1.1"/><path d="M17 15v5M14.5 17.5h5" stroke="#e4e4e4" stroke-width="1.1"/></svg></div>
<div class="hb" style="left:739px;top:522px;width:34px;height:33px;"><svg width="16" height="16" viewBox="0 0 16 16"><circle cx="6.8" cy="6.8" r="5.4" fill="none" stroke="#e0e0e0" stroke-width="1.3"/><path d="M10.6 10.6l3.8 3.8" stroke="#e0e0e0" stroke-width="1.6"/></svg></div>
<div class="hb" style="left:781px;top:522px;width:34px;height:33px;"><svg width="14" height="12" viewBox="0 0 14 12"><path d="M2 1.5h10M2 5.5h10M2 9.5h10" stroke="#e0e0e0" stroke-width="1.2"/></svg></div>
<div class="ic" style="left:840px;top:532px;"><svg width="12" height="12" viewBox="0 0 12 12"><path d="M2 9.5h8" stroke="#e0e0e0" stroke-width="1.3"/></svg></div>
<div class="ic" style="left:880px;top:532px;"><svg width="12" height="12" viewBox="0 0 12 12"><rect x="2.5" y="2.5" width="7.5" height="7.5" fill="none" stroke="#e0e0e0" stroke-width="1.3"/></svg></div>
<div class="ic" style="left:920px;top:532px;"><svg width="12" height="12" viewBox="0 0 12 12"><path d="M2 2l8 8M10 2l-8 8" stroke="#e0e0e0" stroke-width="1.3"/></svg></div>
<div class="tt" style="left:581px;top:529px;color:#c6c6c6;">allai2204@allai22...</div>
<div class="tx" style="left:522px;top:0px;"><div class="ln" style="top:566px;color:#f4f4f4">         at line 84 in ./urdf_parser/src/model</div><div class="ln" style="top:584px;color:#f4f4f4">.cpp</div><div class="ln" style="top:602px;color:#f4f4f4">Error:   Material [silver] has malformed color</div><div class="ln" style="top:620px;color:#f4f4f4"> rgba values: Unable to parse component [192]</div><div class="ln" style="top:638px;color:#f4f4f4">to a double (while parsing a color value)</div><div class="ln" style="top:656px;color:#f4f4f4">         at line 93 in ./urdf_parser/src/link.</div><div class="ln" style="top:674px;color:#f4f4f4">cpp</div><div class="ln" style="top:692px;color:#f4f4f4">Warning: link &#x27;right_front_pole&#x27; material &#x27;sil</div><div class="ln" style="top:710px;color:#f4f4f4">ver&#x27; undefined.</div><div class="ln" style="top:728px;color:#f4f4f4">         at line 84 in ./urdf_parser/src/model</div><div class="ln" style="top:746px;color:#f4f4f4">.cpp</div><div class="ln" style="top:764px;color:#f4f4f4">Warning: link &#x27;right_front_pole&#x27; material &#x27;sil</div><div class="ln" style="top:782px;color:#f4f4f4">ver&#x27; undefined.</div><div class="ln" style="top:800px;color:#f4f4f4">         at line 84 in ./urdf_parser/src/model</div><div class="ln" style="top:818px;color:#f4f4f4">.cpp</div><div class="ln" style="top:836px;color:#bb8250">[WARN] [1770616453.756121319] [rviz]: New publ</div><div class="ln" style="top:854px;color:#bb8250">isher discovered on topic &#x27;/scan&#x27;, offering in</div><div class="ln" style="top:872px;color:#bb8250">compatible QoS. No messages will be sent to it</div><div class="ln" style="top:890px;color:#bb8250">. Last incompatible policy: RELIABILITY_QOS_PO</div><div class="ln" style="top:908px;color:#bb8250">LICY</div><div class="ln" style="top:926px;color:#f4f4f4">[INFO] [1770616454.117813940] [rviz2]: Trying</div><div class="ln" style="top:944px;color:#f4f4f4">to create a map of size 384 x 384 using 1 swat</div><div class="ln" style="top:962px;color:#f4f4f4">ches</div></div>
<div class="cur" style="left:521px;top:976.5px;"></div><div style="position:absolute;left:507px;top:472px;width:4px;height:41px;border:1px dotted rgba(255,255,255,0.13);border-radius:3px;box-sizing:border-box"></div><div style="position:absolute;left:510.5px;top:956.5px;width:5px;height:39px;border:1px dotted rgba(255,255,255,0.13);border-radius:3px;box-sizing:border-box"></div><div style="position:absolute;left:940.5px;top:953.5px;width:5px;height:39px;border:1px dotted rgba(255,255,255,0.13);border-radius:3px;box-sizing:border-box"></div>
</body></html>
